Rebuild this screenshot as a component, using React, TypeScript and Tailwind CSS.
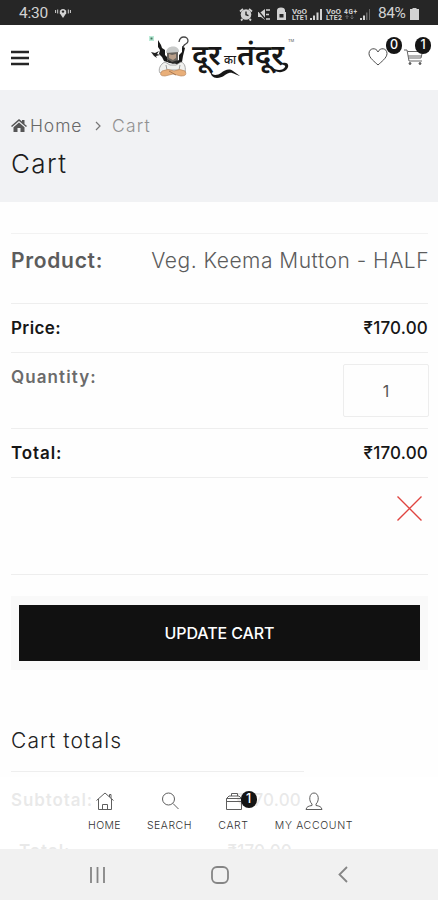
import type { ReactNode } from "react"

function StatusBar() {
  return (
    <div className="flex h-[25px] shrink-0 items-center bg-[#262626] pt-[3px] pl-[19px] text-[#d2d2d2]">
      <span className="w-[31px] text-[15.5px] tracking-[-0.2px] whitespace-nowrap font-['Roboto',sans-serif]">4:30</span>
      <svg width="18" height="12" viewBox="0 0 18 12" className="ml-[4px] mb-[2px]" fill="none" stroke="currentColor">
        <path d="M9 11 5.8 6.2a3.3 3.3 0 1 1 6.4 0Z" fill="currentColor" stroke="none" />
        <circle cx="9" cy="4.6" r="1.2" fill="#262626" stroke="none" />
        <path d="M3.7 2.5v4M1.6 3v3M14.3 2.5v4M16.4 3v3" />
      </svg>
      <svg width="132" height="16" viewBox="0 0 132 16" className="ml-[166px] mb-[1px] font-['Roboto',sans-serif]" fill="currentColor">
        <circle cx="8" cy="8.5" r="5.3" />
        <path d="M2 5.5 5 3M14 5.5 11 3M4.5 13 3 14.5M11.5 13l1.5 1.5" stroke="currentColor" strokeWidth="1.8" />
        <path d="M8 5.5v3.2l2.5 1" fill="none" stroke="#262626" strokeWidth="1.4" />
        <path d="M20 6h3l4-3v11l-4-3h-3Z" />
        <path d="m19 3 9 11" stroke="#262626" strokeWidth="1.2" />
        <path d="M28 4h4M28 8.5h3M28 13h4" stroke="currentColor" strokeWidth="1.5" />
        <path d="M39 6V4.5a4 3 0 0 1 8 0V6h1v8h-9V6Z" />
        <path d="M41.5 8h4v3.5h-4z" fill="#262626" />
        <text x="54" y="7.5" fontSize="7" fontWeight="700" textLength="15" lengthAdjust="spacingAndGlyphs">VoO</text>
        <text x="54" y="14" fontSize="7" fontWeight="700" textLength="16">LTE1</text>
        <path d="M72 12h2v2h-2zM75 9.5h2V14h-2zM78.5 6.5h2V14h-2zM82 3h2v11h-2z" />
        <text x="88" y="7.5" fontSize="7" fontWeight="700" textLength="15" lengthAdjust="spacingAndGlyphs">VoO</text>
        <text x="88" y="14" fontSize="7" fontWeight="700" textLength="16">LTE2</text>
        <text x="106" y="7.5" fontSize="6.5" fontWeight="700" textLength="13">4G+</text>
        <path d="M109 13V9.5m-1.5 1.5 1.5-1.5 1.5 1.5M114 9v4m-1.5-1.5 1.5 1.5 1.5-1.5" fill="none" stroke="#686868" />
        <path d="M122 12h2v2h-2zM125 9.5h2V14h-2z" />
        <path d="M128 6.5h1.5V14H128zM131 3h1v11h-1z" fill="#686868" />
      </svg>
      <span className="ml-[8px] w-[30px] text-[15.5px] tracking-[-0.4px] whitespace-nowrap font-['Roboto',sans-serif]">84%</span>
      <svg width="9" height="12" viewBox="0 0 9 12" className="ml-[2px]" fill="currentColor"><path d="M2.5 0h4v1H9v11H0V1h2.5z" /></svg>
    </div>
  )
}

function Logo() {
  return (
    <svg width="150" height="46" viewBox="0 0 150 46" className="ml-[119px]">
      <path d="M0 1h5v5H0z" fill="#bcebd8" />
      <path d="M1.5 2.5h2v2h-2z" fill="#43755f" />
      <path d="m2 17 4 1 4-2-2 3 3 1-4 1 1 2-3-2Z" fill="#222" />
      <path d="m9 5 3 5 1 3 3 2v5l4 4 1 4-6-2-2-4-3-3 1-4-2-3Z" fill="#181818" />
      <path d="m33 11 3 2-1 4-1 4-1 6-5 3-2-3 4-2v-5l3-3Z" fill="#181818" />
      <path d="M30 7c1-7 9-6 9-1 0 4-5 2-5 7" fill="none" stroke="#474747" strokeWidth="1.3" />
      <path d="M18 17h11v8l-5 4-6-3Z" fill="#68635d" />
      <path d="M17 18c0-9 14-8 13-1Z" fill="#c8cac9" />
      <path d="m20 19 3 1 4-1v4l-3 2-4-2Z" fill="#b89e89" />
      <path d="m18 24 5 3 6-2-1 4-8-1Z" fill="#292929" />
      <path d="M16 27c-5 2-7 8-5 11l8-3h11l6 3c1-5 0-10-4-11l-5 3h-6Z" fill="#f1f1ef" stroke="#969696" strokeWidth="0.8" />
      <path d="m17 30 1 5m13-5-1 5" stroke="#777" strokeWidth="0.7" />
      <path d="M13 36q6-3 12 0 6-3 11 0 3 5-4 5l-8-2-8 2q-7 0-3-5Z" fill="#e9af79" stroke="#bb8960" strokeWidth="0.7" />
      <path d="m20 36 7 4" stroke="#986b49" strokeWidth="0.8" />
      <g fill="#171717" fontFamily="'Noto Sans Devanagari', 'Noto Sans', sans-serif" fontWeight="600">
        <text transform="translate(43 30) scale(1 1.100)" fontSize="26" textLength="29" lengthAdjust="spacingAndGlyphs">दूर</text>
        <text x="75" y="29" fontSize="12" fontWeight="500" textLength="12" lengthAdjust="spacingAndGlyphs">का</text>
        <text transform="translate(88 30) scale(1 1.100)" fontSize="26" textLength="47" lengthAdjust="spacingAndGlyphs">तंदूर</text>
      </g>
      <path d="M62 36c1 6 7 4 10 2 4-3 8-5 12-2l7 5c-5-1-7-4-11-3-4 1-6 5-12 5-4 0-7-3-6-7Z" fill="#171717" />
      <path d="M131 29c9-4 10 3 6 6-5 4-12 2-15-3 5 4 12 4 14 0 1-2-2-2-5-3Z" fill="#171717" />
      <text x="139" y="7" fontSize="4" fill="#555" fontFamily="Inter">TM</text>
    </svg>
  )
}

function Badge({ children }: { children: ReactNode }) {
  return <b className="absolute flex h-[17px] w-[16px] items-center justify-center rounded-full bg-[#151515] text-[12.5px] font-medium text-white">{children}</b>
}

function Header() {
  return (
    <header className="flex h-[65px] shrink-0 items-center bg-white pl-[11px]">
      <svg width="19" height="16" viewBox="0 0 19 16" stroke="#252525" strokeWidth="2.5"><path d="M0 2h18M0 8h18M0 14h18" /></svg>
      <Logo />
      <div className="relative mt-[-2px] ml-[69px] flex">
        <svg width="20" height="18" viewBox="0 0 20 18" fill="none" stroke="#4b4b4b"><path d="M10 17C7 14 1 10 1 5.5 1 0 8-1 10 4c2-5 9-4 9 1.5C19 10 13 14 10 17Z" /></svg>
        <div className="absolute top-[-11px] left-[18px]"><Badge>0</Badge></div>
      </div>
      <div className="relative mt-[-1px] ml-[16px] flex">
        <svg width="20" height="18" viewBox="0 0 20 18" fill="none" stroke="#666"><path d="M0 2h3l2 11h13M3.5 3.5H18.5L17 10H5M4 8h13.5" /><circle cx="6" cy="15.5" r="1" fill="#444" /><circle cx="16" cy="15.5" r="1" fill="#444" /></svg>
        <div className="absolute top-[-11px] left-[11px]"><Badge>1</Badge></div>
      </div>
    </header>
  )
}

function PageTitle() {
  return (
    <section className="h-[112px] shrink-0 bg-[#f1f2f4] px-[11px] pt-[25px]">
      <div className="flex h-[22px] items-center text-[17.5px] font-light text-[#686868]">
        <svg width="16" height="14" viewBox="0 0 16 14" className="mr-[3px]" fill="#565656"><path d="M0 7 8 0l3 2.6V1h2.5v4L16 7l-1 1-7-6-7 6Z" /><path d="m8 3.5 5.5 4.8V13H9.5V9h-3v4h-4V8.3Z" /></svg>
        <span className="w-[53px] whitespace-nowrap tracking-[0.9px]">Home</span>
        <svg width="7" height="10" viewBox="0 0 7 10" className="ml-[12px]" fill="none" stroke="#777" strokeWidth="1.2"><path d="m1 1 4 4-4 4" /></svg>
        <span className="ml-[10px] tracking-[1.2px] text-[#919191]">Cart</span>
      </div>
      <h1 className="mt-[10px] text-[26px] leading-[34px] font-light tracking-[1.4px] text-[#1d1d1d]">Cart</h1>
    </section>
  )
}

function Row({ label, value, className }: { label: string; value: ReactNode; className: string }) {
  return (
    <div className={"flex justify-between border-b border-[#eeeeee] " + className}>
      <span className="font-semibold">{label}</span>
      {value}
    </div>
  )
}

function CartItem() {
  return (
    <div className="mx-[11px] mr-[10px] mt-[31px] border-t border-[#f2f2f2] text-[17px]">
      <Row
        label="Product:"
        value={<span className="mr-[-1px] font-light tracking-[0.5px]">Veg. Keema Mutton - HALF</span>}
        className="h-[70px] pt-[12px] text-[21px] leading-[30px] tracking-[0.7px] text-[#5c5c5c]"
      />
      <Row label="Price:" value={<span className="font-medium tracking-[0.2px]">₹170.00</span>} className="h-[49px] pt-[12px] leading-[24px] tracking-[0.4px] text-[#161616]" />
      <Row
        label="Quantity:"
        value={<span className="mr-[-1px] flex h-[53px] w-[86px] items-center justify-center rounded-[2px] border border-[#ededed] text-[16px] font-normal tracking-normal text-[#555]">1</span>}
        className="h-[76px] pt-[11px] leading-[26px] tracking-[1.1px] text-[#6b6b6b]"
      />
      <Row label="Total:" value={<span className="font-medium tracking-[0.2px]">₹170.00</span>} className="h-[49px] pt-[12px] leading-[24px] tracking-[0.9px] text-[#161616]" />
      <div className="flex h-[97px] justify-end border-b border-[#eeeeee] pt-[18px] pr-[6px]">
        <svg width="25" height="25" viewBox="0 0 25 25" stroke="#e04440" strokeWidth="1.4"><path d="m.5.5 24 24m0-24-24 24" /></svg>
      </div>
    </div>
  )
}

function CartTotals() {
  return (
    <section className="ml-[11px] w-[293px] pt-[54px]">
      <h2 className="h-[48px] border-b border-[#eeeeee] text-[21px] leading-[34px] font-light tracking-[1.1px] text-[#222]">Cart totals</h2>
      <div className="flex justify-between pt-[15px] pr-[3px] text-[17px] leading-[26px] font-semibold text-[#222]"><span className="tracking-[0.9px]">Subtotal:</span><span className="font-medium tracking-[0.2px]">₹170.00</span></div>
      <div className="flex justify-between pt-[25px] pr-[12px] pl-[8px] text-[17px] leading-[26px] font-semibold text-[#222]"><span className="tracking-[0.9px]">Total:</span><span className="font-medium tracking-[0.2px]">₹170.00</span></div>
    </section>
  )
}

const tabs = [
  { label: "HOME", width: "w-[33px] tracking-[0.35px]", icon: <path d="M.5 8.5 9 1l8.5 7.5M2.5 7v10.5h13V7M6.5 17.5v-5h5v5M13.5 5V2.5h1.5v4" /> },
  { label: "SEARCH", width: "w-[45px] tracking-[0.5px]", icon: <><circle cx="7.5" cy="7" r="6" /><path d="m12 11.5 5.5 5.5" /></> },
  { label: "CART", width: "w-[31px] tracking-[0.6px]", icon: <path d="M1.5 6.5h15v11h-15ZM1.5 6.5l2.500-2.500h10l2.500 2.500M6.5 4V1.500h6V4M1.500 9.500h15" /> },
  { label: "MY ACCOUNT", width: "w-[78px] tracking-[0.65px]", icon: <path d="M7 12C3.5 9 4 1 9 1s5.5 8 2 11v1.5c3 .5 5.5 1 6 4H1c.5-3 3-3.5 6-4Z" /> },
]

function TabBar() {
  return (
    <nav className="absolute right-0 bottom-0 left-0 flex h-[72px] bg-white/90 pt-[15px] pl-[88px]">
      {tabs.map((tab) => (
        <div key={tab.label} className="mr-[26px] flex flex-col items-center last:mr-0">
          <div className="relative flex">
            <svg width="18" height="18" viewBox="0 0 18 18" fill="none" stroke="#5e5e5e">{tab.icon}</svg>
            {tab.label === "CART" && <div className="absolute top-[-1px] left-[16px]"><Badge>1</Badge></div>}
          </div>
          <span className={"mt-[8px] flex justify-center text-[10.5px] leading-[16px] font-light whitespace-nowrap text-[#333] " + tab.width}>{tab.label}</span>
        </div>
      ))}
    </nav>
  )
}

function SystemNav() {
  return (
    <div className="flex h-[51px] shrink-0 items-center bg-[#f1f1f1] pl-[89px]">
      <svg width="17" height="16" viewBox="0 0 17 16" stroke="#858585" strokeWidth="1.8"><path d="M2 0v16M8.5 0v16M15 0v16" /></svg>
      <svg width="18" height="18" viewBox="0 0 18 18" className="ml-[105px]" fill="none" stroke="#858585" strokeWidth="1.8"><rect x="1" y="1" width="16" height="16" rx="5" /></svg>
      <svg width="10" height="17" viewBox="0 0 10 17" className="ml-[109px]" fill="none" stroke="#858585" strokeWidth="1.8"><path d="M9 1 1.5 8.5 9 16" /></svg>
    </div>
  )
}

export default function App() {
  return (
    <div className="flex h-[900px] w-[438px] flex-col overflow-hidden bg-[#fefefe] font-['Inter','Noto_Sans',sans-serif]">
      <StatusBar />
      <Header />
      <PageTitle />
      <main className="relative min-h-0 flex-1 overflow-hidden">
        <CartItem />
        <div className="mt-[21px] mr-[10px] ml-[11px] bg-[#f9f9f9] px-[8px] pt-[9px] pb-[9px]">
          <button className="h-[56px] w-full bg-[#111] text-[16px] font-medium tracking-[-0.1px] text-white">UPDATE CART</button>
        </div>
        <CartTotals />
        <TabBar />
      </main>
      <SystemNav />
    </div>
  )
}
